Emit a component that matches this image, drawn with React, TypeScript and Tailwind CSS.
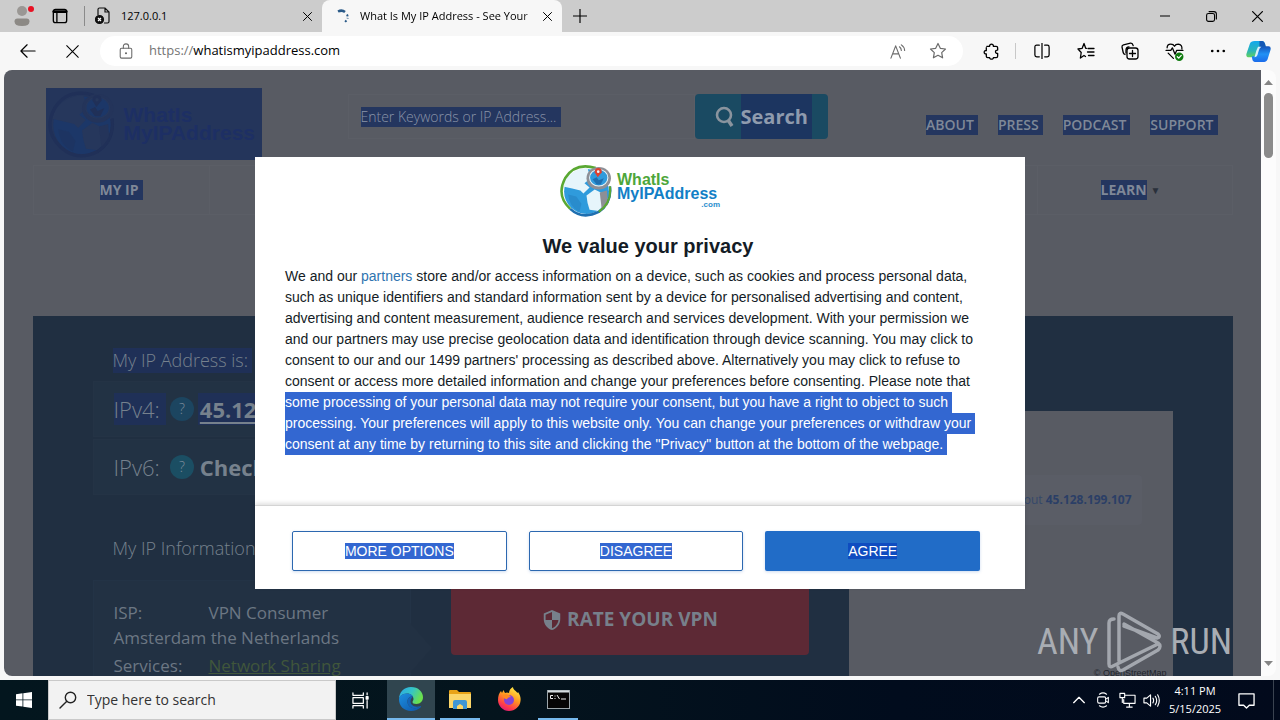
import type { ReactNode } from "react";
import { MdSecurity } from "react-icons/md";

const ui = "font-['Open_Sans','Noto_Sans',sans-serif]";

function Icon({ size = 18, sw = 1.2, children, className = "" }: { size?: number; sw?: number; children: ReactNode; className?: string }) {
  return (
    <svg width={size} height={size} viewBox="0 0 18 18" fill="none" stroke="currentColor" strokeWidth={sw} strokeLinecap="round" strokeLinejoin="round" className={className} aria-hidden="true">
      {children}
    </svg>
  );
}

const STAR = "M9 1.5l2.3 4.8 5.2.7-3.8 3.6.9 5.2L9 13.3l-4.6 2.5.9-5.2L1.500 7l5.200-.7z";

function IconButton({ label, className, children }: { label: string; className: string; children: ReactNode }) {
  return (
    <button aria-label={label} className={`flex h-full shrink-0 items-center justify-center ${className}`}>
      {children}
    </button>
  );
}

function CloseGlyph({ size = 10 }: { size?: number }) {
  return (
    <Icon size={size} sw={2}>
      <path d="M1 1l16 16M17 1L1 17" />
    </Icon>
  );
}

function TabBar() {
  return (
    <header className={`flex h-8 shrink-0 bg-[#cccccc] text-[11px] text-black ${ui}`}>
      <IconButton label="Profile" className="relative w-11">
        <svg width="20" height="20" viewBox="0 0 20 20" fill="#8c8985" aria-hidden="true">
          <circle cx="10" cy="5" r="5" fill="#9a9794" />
          <path d="M2.500 15.500q0-3 3-3h9q3 0 3 3 0 4.500-7.500 4.500t-7.500-4.500z" />
        </svg>
        <span className="absolute top-1.5 right-2.5 size-1.5 rounded-full bg-[#e81123]" />
      </IconButton>
      <IconButton label="Tab actions" className="w-10 pr-2">
        <Icon size={16} sw={1.5}>
          <rect x="1.500" y="1.500" width="15" height="15" rx="2.500" />
          <path d="M2 4h14" strokeWidth="3" /><path d="M5.500 4v12" />
        </Icon>
      </IconButton>
      <span className="my-1.5 w-px bg-[#8a8a8a]" />
      <div className="flex w-[237px] items-center pr-2.5 pl-2.5">
        <svg width="16" height="18" viewBox="0 0 16 18" fill="none" stroke="#111" strokeWidth="1.200" aria-hidden="true">
          <path d="M3 8V2.500Q3 1 4.500 1H10l4 4v9.500q0 1.500-1.500 1.500H9M10 1v4h4" />
          <circle cx="4.500" cy="12.500" r="4" fill="#111" />
          <path d="M3 11l3 3M6 11l-3 3" stroke="#fff" />
        </svg>
        <span className="ml-2.5 flex-1">127.0.0.1</span>
        <button aria-label="Close tab"><CloseGlyph size={9} /></button>
      </div>
      <div className="flex w-[240px] items-center rounded-t-lg bg-[#f7f7f7] pr-2.5 pl-3.5">
        <svg width="14" height="14" viewBox="0 0 14 14" fill="none" stroke="#2a5a88" strokeWidth="2" aria-hidden="true">
          <path d="M2 2.500Q6 .5 9 3" strokeWidth="2.500" />
          <path d="M11 5.500q1 2 .5 4M10.500 11.500L9 13" strokeDasharray="2 1.500" />
        </svg>
        <span className="ml-2.5 flex-1 bg-[linear-gradient(90deg,#000_88%,#bbb)] bg-clip-text whitespace-nowrap text-transparent">What Is My IP Address - See Your</span>
        <button aria-label="Close tab"><CloseGlyph size={9} /></button>
      </div>
      <IconButton label="New tab" className="w-9">
        <Icon size={14} sw={1.5}><path d="M9 0v18M0 9h18" /></Icon>
      </IconButton>
      <div className="ml-auto flex">
        <IconButton label="Minimize" className="w-[46px]"><Icon size={10} sw={2}><path d="M0 9h18" /></Icon></IconButton>
        <IconButton label="Restore" className="w-[46px]">
          <Icon size={11} sw={1.8}><rect x="1" y="4" width="13" height="13" rx="3" /><path d="M5 1h8q4 0 4 4v8" /></Icon>
        </IconButton>
        <IconButton label="Close window" className="w-[46px]"><CloseGlyph size={11} /></IconButton>
      </div>
    </header>
  );
}

function Toolbar() {
  return (
    <div className={`flex h-[38px] shrink-0 items-center bg-[#f7f7f7] pl-1.5 text-[13px] text-black ${ui}`}>
      <IconButton label="Back" className="w-11"><Icon size={16} sw={1.3}><path d="M17 9H1.500M8 2L1 9l7 7" /></Icon></IconButton>
      <IconButton label="Stop" className="mr-1.5 w-11"><Icon size={13} sw={1.5}><path d="M1 1l16 16M17 1L1 17" /></Icon></IconButton>
      <div className="flex h-[30px] flex-1 items-center rounded-full bg-white pr-4 pl-[18px] text-[#6b6b6b]">
        <Icon size={16}>
          <rect x="2.500" y="6" width="13" height="11" rx="1.500" /><path d="M6 6V4q0-3 3-3t3 3v2" /><circle cx="9" cy="11.500" r=".6" fill="currentColor" />
        </Icon>
        <a href="#" className="ml-[15px] flex-1 text-[#757575]">https://<span className="text-black">whatismyipaddress.com</span></a>
        <button aria-label="Read aloud" className="mr-[22px]">
          <Icon size={17}><path d="M1 16L6 3l5 13M3 11.500h6M10 4q2 1.500 2 4M12 2q3.500 2.500 3.500 6" /></Icon>
        </button>
        <button aria-label="Favorite this page"><Icon size={18}><path d={STAR} /></Icon></button>
      </div>
      <IconButton label="Extensions" className="ml-1.5 w-11">
        <Icon size={17} sw={1.4}><path d="M4 3.500h3c-.5-3 4.500-3 4 0h3q1.500 0 1.500 1.500v2.500c-3-.5-3 4 0 3.500V14q0 1.500-1.500 1.500h-3c.3 2.200-4.200 2.200-4 0H5Q3.500 15.500 3.500 14v-2.500C.5 12 .5 7.500 3.500 8V5" /></Icon>
      </IconButton>
      <span className="mr-1 ml-0.5 h-4 w-px bg-[#c8c8c8]" />
      <IconButton label="Split screen" className="w-11">
        <Icon size={16} sw={1.4}><path d="M6 2.500H3Q1 2.500 1 4.500v9q0 2 2 2h3M12 2.500h3q2 0 2 2v9q0 2-2 2h-3M9 0v18" /></Icon>
      </IconButton>
      <IconButton label="Favorites" className="w-11">
        <Icon size={18} sw={1.3}><path d="M9.500 6.300h-.8L7 1.500 5.200 6.300 1 7l3.200 3.500-.8 5.500L7 13.500l1.500 1M11 6.500h6M10.500 10h6.500M11.500 13.500H17" /></Icon>
      </IconButton>
      <IconButton label="Collections" className="w-11">
        <Icon size={18} sw={1.3}><rect x="6" y="6" width="11" height="11" rx="2.500" /><path d="M11.500 8.500v6M8.500 11.500h6M4 12.500q-1.500-.5-1.800-2L1 5Q.800 3.200 2.500 2.800L9.500 1.200q2-.3 2.700 2.500M5 11V8q0-3 3-3.200" /></Icon>
      </IconButton>
      <IconButton label="Browser essentials" className="w-11">
        <Icon size={19} sw={1.2}><path d="M1 8h4.500L7 5.500l2.500 6L11 8h6M2 5.500Q2 2 5.500 2 8 2 9 4q1-2 3.500-2Q16.500 2.500 16 6.500M3 10.500L8 15.500" /><circle cx="13.500" cy="14" r="4" fill="#107c10" stroke="none" /><path d="M11.700 14l1.300 1.300 2.400-2.600" stroke="#fff" /></Icon>
      </IconButton>
      <IconButton label="Settings and more" className="w-11">
        <Icon size={16}><g fill="currentColor" stroke="none"><circle cx="2.500" cy="9" r="1.500" /><circle cx="9" cy="9" r="1.500" /><circle cx="15.500" cy="9" r="1.500" /></g></Icon>
      </IconButton>
      <IconButton label="Copilot" className="w-10 pr-1">
        <svg width="25" height="23" viewBox="0 0 26 24" aria-hidden="true">
          <defs>
            <linearGradient id="cpA" x1="0" y1="0" x2="0" y2="1"><stop offset="0" stopColor="#12a8ee" /><stop offset=".6" stopColor="#2bb5b8" /><stop offset="1" stopColor="#62d25b" /></linearGradient>
            <linearGradient id="cpB" x1="0" y1="0" x2="0" y2="1"><stop offset="0" stopColor="#1552b8" /><stop offset=".5" stopColor="#2191f5" /><stop offset="1" stopColor="#1b6bea" /></linearGradient>
          </defs>
          <path d="M9 1h8q2 0 2.800 3l1 4h-4q-2.500 0-3.500 3l-1.500 5q-.8 2-2.800 2H3q-3.500 0-2.500-4L4 4q1-3 5-3z" fill="url(#cpA)" />
          <path d="M17 23H9q-2 0-2.500-3L6 17h3q2 0 3-3l1.500-5q.8-2.500 3.500-2.500h6.500q3 0 2 4L22.500 20q-1 3-5.500 3z" fill="url(#cpB)" />
          <path d="M14 1h3q2 0 2.800 3l.8 3H17q-2 0-3 1z" fill="#1457b5" />
          <path d="M12.500 7h3.500q-2 1-2.700 4l-1.500 5q-.8 2-3 2l2-7z" fill="#d9f1fb" />
        </svg>
      </IconButton>
    </div>
  );
}

function Globe({ dim = false, size }: { dim?: boolean; size: number }) {
  const c = dim
    ? { g: "#203058", b: "#203058", sea: "#1c3768", land: "#26375c", metal: "#24345a", pin: "#203058" }
    : { g: "#5aa832", b: "#1f6fb0", sea: "#2f9bdc", land: "#e6f5fb", metal: "#8d8f96", pin: "#e0402f" };
  return (
    <svg width={size} height={size} viewBox="0 0 52 52" aria-hidden="true">
      <circle cx="26" cy="27" r="22" fill={c.sea} />
      <path d="M3 22Q8 5 27 4L30 14 24 19 29 23 23 29 20 26 12 24Z" fill={c.land} />
      <path d="M26 31l8-6 8 4 4 8-8 9-9-1-2-7z" fill={c.land} />
      <path d="M8 30l8 2 5 7-2 8Q9 42 8 30z" fill={c.b} opacity=".35" />
      <path d="M35 4Q15-2 5 14-4 31 10 44" fill="none" stroke={c.g} strokeWidth="2.500" />
      <path d="M10 44Q22 55 38 47 51 38 49 22" fill="none" stroke={c.b} strokeWidth="2.500" />
      <path d="M39 28l7-2 1 14-6 5z" fill={c.metal} />
      <path d="M38 47Q51 38 49 22" fill="none" stroke={c.g} strokeWidth="2" />
      <ellipse cx="38" cy="14" rx="12" ry="11" fill={c.metal} />
      <ellipse cx="38" cy="13.500" rx="9" ry="8" fill={c.sea} stroke={c.land} strokeWidth="1" />
      <path d="M32 15l4-2 2 3 5-2-3 6h-4z" fill={c.b} />
      <path d="M37 13l-3-5q0-4 3.500-4T41 8z" fill={c.pin} />
      <circle cx="37.500" cy="7.500" r="1.300" fill={c.land} />
    </svg>
  );
}

function SiteHeader() {
  return (
    <div>
      <div className="flex h-[95px] items-start pt-[18px] pl-[13px]">
        <a href="#" aria-label="WhatIsMyIPAddress home" className="flex h-[72px] w-[216px] items-center bg-[#24355b] pl-0.5 font-['Liberation_Sans',sans-serif] font-bold text-[#1d2f64]">
          <Globe dim size={68} />
          <span className="ml-2 text-[21px] leading-[18px]">WhatIs<br />MyIPAddress</span>
        </a>
        <form className="mt-1.5 ml-[86px] flex h-[45px]" onSubmit={(e) => e.preventDefault()}>
          <label className="flex w-[347px] items-center border border-[#5b5e66] pl-3">
            <span className="flex w-[200px] bg-[#24365f]">
              <input aria-label="Search" placeholder="Enter Keywords or IP Address..." className="h-5 w-full bg-transparent text-sm font-light outline-none placeholder:text-[#8a94a8] placeholder:opacity-100" />
            </span>
          </label>
          <button className="flex w-[133px] items-center rounded-sm bg-[#1a4a62] pr-4 pl-5 text-xl font-bold text-[#8f9bae]">
            <svg width="20" height="22" viewBox="0 0 20 22" fill="none" stroke="#8a949e" strokeWidth="2.600" aria-hidden="true"><circle cx="9" cy="9" r="7" /><path d="M13 14l4 6" strokeWidth="3.500" /></svg>
            <span className="ml-1.5 flex h-full flex-1 items-center bg-[#1c3560]">Search</span>
          </button>
        </form>
        <nav className="mt-[27px] mr-[15px] ml-auto flex gap-5 text-sm leading-5 font-semibold text-[#7f8897]">
          {["ABOUT", "PRESS", "PODCAST", "SUPPORT"].map((t) => (
            <a key={t} href="#" className="bg-[#24365f] pr-1">{t}</a>
          ))}
        </nav>
      </div>
      <nav className="flex h-[50px] justify-between border border-[#5b5e66] text-sm leading-5 font-bold text-[#7f8897]">
        <a href="#" className="flex w-[176px] items-center justify-center border-r border-[#5b5e66]">
          <span className="bg-[#24365f] pr-1">MY IP</span>
        </a>
        <a href="#" className="flex w-[195px] items-center justify-center gap-1 border-l border-[#5b5e66] pr-2">
          <span className="bg-[#24365f]">LEARN</span>
          <span className="text-[10px] text-[#2a303b]">▼</span>
        </a>
      </nav>
    </div>
  );
}

function Help({ selected = false }: { selected?: boolean }) {
  return (
    <span className={`mx-1 flex size-6 items-center justify-center rounded-full text-sm text-[#7b8c9b] ${selected ? "bg-[#1c4560]" : "bg-[#1b4e63]"}`}>?</span>
  );
}

function Hero() {
  return (
    <section className="mt-[101px] flex h-[500px] bg-[#202f41] pr-[60px] pl-[60px] text-lg font-light text-[#76818d]">
      <div className="flex-1">
        <p className="mt-8 ml-5 w-fit bg-[#1f3057] pr-1 leading-[25px]">My IP Address is:</p>
        <div className="mt-2 flex h-14 items-center border border-[#243345] bg-[#223244] pl-5 text-[22px] leading-8">
          <span className="bg-[#1f3057] pr-1.5">IPv4:</span>
          <Help selected />
          <b className="bg-[#1f3057] pl-0.5 font-bold underline underline-offset-4">45.128.199.107</b>
        </div>
        <div className="mt-0.5 flex h-14 items-center border border-[#243345] bg-[#223244] pl-5 text-[22px] leading-8">
          <span className="pr-1.5">IPv6:</span>
          <Help />
          <b className="pl-0.5 font-bold">Checking...</b>
        </div>
        <p className="mt-10 ml-5 leading-[27px]">My IP Information:</p>
        <div className="mt-[18px] flex items-start">
          <div className="relative h-[200px] w-[318px] border border-[#233346] bg-[#223143] pt-[19px] pl-5 text-[17px] leading-[25px] font-normal text-[#6c7783]">
            <div className="flex"><span className="w-[95px]">ISP:</span><span>VPN Consumer</span></div>
            <div>Amsterdam the Netherlands</div>
            <div className="mt-[3px] flex"><span className="w-[95px]">Services:</span><a href="#" className="text-[#40563b] underline">Network Sharing</a></div>
            <svg className="absolute top-[42px] -right-[22px]" width="22" height="50" viewBox="0 0 22 50" aria-hidden="true"><path d="M0 0L22 25 0 50z" fill="#223143" /></svg>
          </div>
          <button className="ml-10 flex h-[75px] w-[358px] items-center justify-center gap-1 rounded-sm bg-[#5d2935] pt-1 text-[19px] font-bold text-[#77808b]">
            <MdSecurity size={22} />
            RATE YOUR VPN
          </button>
        </div>
      </div>
      <div className="mt-[95px] flex w-[324px] flex-col bg-[#585b63] pt-16">
        <div className="mr-[31px] flex h-[50px] items-center justify-end rounded-sm bg-[#5a5d66] pr-2.5 text-xs font-normal text-[#35486a]">
          <a href="#" className="whitespace-nowrap">about <b className="text-[#2b3f66]">45.128.199.107</b></a>
        </div>
        <span className="mt-[142px] mr-1.5 text-right font-['Liberation_Sans',sans-serif] text-[9px] leading-3 font-normal text-[#20242b]">© OpenStreetMap</span>
      </div>
    </section>
  );
}

const LINES = [
  "such as unique identifiers and standard information sent by a device for personalised advertising and content,",
  "advertising and content measurement, audience research and services development. With your permission we",
  "and our partners may use precise geolocation data and identification through device scanning. You may click to",
  "consent to our and our 1499 partners' processing as described above. Alternatively you may click to refuse to",
  "consent or access more detailed information and change your preferences before consenting. Please note that",
];
const SELECTED = [
  "some processing of your personal data may not require your consent, but you have a right to object to such",
  "processing. Your preferences will apply to this website only. You can change your preferences or withdraw your",
  "consent at any time by returning to this site and clicking the \"Privacy\" button at the bottom of the webpage.",
];

function Dialog() {
  return (
    <div role="dialog" aria-labelledby="privacy-title" className="flex h-[432px] w-[770px] flex-col bg-white font-['Liberation_Sans',Arial,sans-serif] text-sm text-[#141c26]">
      <div className="flex-1 pt-[7px] pl-[30px]">
        <div className="mr-[30px] flex items-center justify-center">
          <Globe size={53} />
          <div className="ml-1 flex w-[103px] flex-col font-bold">
            <span className="text-base leading-[14px] text-[#4ea63a]">WhatIs</span>
            <span className="text-base leading-[14px] text-[#127fc6]">MyIPAddress</span>
            <span className="text-right text-[8px] leading-2 text-[#2b8fce]">.com</span>
          </div>
        </div>
        <h1 id="privacy-title" className="mt-4 mr-[14px] text-center text-xl leading-[26px] font-bold">We value your privacy</h1>
        <div className="mt-[7px] leading-[21px] whitespace-nowrap">
          <p>We and our <a href="#" className="text-[#2f74b0]">partners</a> store and/or access information on a device, such as cookies and process personal data,</p>
          {LINES.map((l) => <p key={l}>{l}</p>)}
          {SELECTED.map((l) => <p key={l} className="w-fit bg-[#3367d1] pr-1 text-white">{l}</p>)}
        </div>
      </div>
      <div className="grid h-[84px] grid-cols-3 items-center gap-[22px] border-t border-[#d4d4d4] pt-1.5 pr-[45px] pl-[37px] shadow-[0_-2px_4px_rgba(0,0,0,0.12)]">
        {["MORE OPTIONS", "DISAGREE"].map((t) => (
          <button key={t} className="h-10 rounded-xs border border-[#2c68b0] text-white shadow-[0_1px_3px_rgba(50,110,190,0.25)]">
            <span className="bg-[#3367d1]">{t}</span>
          </button>
        ))}
        <button className="h-10 rounded-xs bg-[#216cc7] text-white shadow-[0_1px_3px_rgba(50,110,190,0.25)]"><span className="bg-[#0f4cc0]">AGREE</span></button>
      </div>
    </div>
  );
}

function Watermark() {
  return (
    <div className="absolute right-12 bottom-1.5 flex h-16 items-center gap-2 font-['Roboto_Condensed','Liberation_Sans_Narrow','Liberation_Sans',sans-serif] text-4xl leading-none text-[#a9adb3]">
      <span>ANY</span>
      <svg width="56" height="62" viewBox="0 0 56 62" fill="none" stroke="#a3a7ae" strokeWidth="3.500" strokeLinejoin="round" strokeLinecap="round" aria-hidden="true">
        <path d="M8 8Q3 8 3 12v41q0 4 4 2L52 33M13 50V5q0-4 4-2l35 20q3 3-1 4L18 15M12 56q1 5 5 3l35-20q4-4 0-7L18 13" />
      </svg>
      <span>RUN</span>
    </div>
  );
}

function Viewport() {
  return (
    <div className="relative min-h-0 flex-1 bg-[#f7f7f7] px-1 pb-1">
      <div className="flex h-full overflow-hidden rounded-lg bg-[#fcfcfc]">
        <main className={`min-w-0 flex-1 overflow-hidden bg-[#585b63] ${ui}`}>
          <div className="mx-auto max-w-[1200px]">
            <SiteHeader />
            <Hero />
          </div>
        </main>
        <div className="flex w-[15px] flex-col items-center pt-2.5 pb-2.5">
          <svg width="9" height="5" viewBox="0 0 9 5" aria-hidden="true"><path d="M0 5l4.500-5L9 5z" fill="#858585" /></svg>
          <span className="mt-2 h-[65px] w-[9px] rounded-full bg-[#8b8b8b]" />
          <svg className="mt-auto" width="9" height="5" viewBox="0 0 9 5" aria-hidden="true"><path d="M0 0l4.500 5L9 0z" fill="#858585" /></svg>
        </div>
      </div>
      <div className="absolute inset-0 bottom-1 flex items-center justify-center"><Dialog /></div>
      <Watermark />
    </div>
  );
}

function EdgeLogo() {
  return (
    <svg width="24" height="24" viewBox="0 0 24 24" aria-hidden="true">
      <defs>
        <linearGradient id="edA" x1="0" y1="0" x2="1" y2=".4"><stop offset="0" stopColor="#2ba7e8" /><stop offset=".55" stopColor="#35c5c6" /><stop offset="1" stopColor="#6be04d" /></linearGradient>
        <linearGradient id="edB" x1="0" y1="0" x2="1" y2="1"><stop offset="0" stopColor="#1c8fe0" /><stop offset="1" stopColor="#0f55a8" /></linearGradient>
      </defs>
      <path d="M0 12.500C0 5 5 0 12 0c7.500 0 12 5 12 10.300 0 4-3 6.700-6.500 6.700-3 0-4-1-4-2 0-.8 1-1.200 1-3C14.500 9 12 6.500 8 6.500c-5 0-8 3.500-8 6z" fill="url(#edA)" />
      <path d="M0 12.500C0 9 3.500 6.500 8 6.500c3 0 5 1.300 6 3-3.500-.5-5.500 2-5.500 5 0 4.500 4 7.500 8.500 6.500 2-.4 3.500-1.200 4.500-2 1 0 .5 1 .2 1.300C19.500 22.700 16 24 12 24 5 24 0 19 0 12.500z" fill="url(#edB)" />
      <path d="M14 9.500c-3.500-.5-5.500 2-5.500 5 0 4.500 4 7.500 8.500 6.500 2-.4 3.500-1.200 4.500-2-6 2-10-1-10-4.500 0-2 1-3.500 2.500-5z" fill="#1464b8" />
    </svg>
  );
}

function Taskbar() {
  return (
    <footer className={`flex h-10 shrink-0 bg-[linear-gradient(90deg,#03161e,#04141d_40%,#010c1d_70%,#020a1c)] text-white ${ui}`}>
      <IconButton label="Start" className="w-12">
        <svg width="16" height="16" viewBox="0 0 16 16" fill="#fff" aria-hidden="true"><path d="M0 2.200L6.500 1.300V7.500H0zM7.300 1.200L16 0v7.500H7.300zM0 8.300h6.500v6.300L0 13.700zM7.300 8.300H16V16l-8.700-1.200z" /></svg>
      </IconButton>
      <label className="flex w-[288px] items-center border border-[#c9c9c9] bg-[#f2f2f2] pl-2.5 text-[#222]">
        <Icon size={18} sw={1.4}><circle cx="11.500" cy="6.500" r="5.200" /><path d="M7.800 10.200L1 17" /></Icon>
        <input aria-label="Search" placeholder="Type here to search" className="ml-2.5 w-48 bg-transparent text-sm outline-none placeholder:text-[#333] placeholder:opacity-100" />
      </label>
      <IconButton label="Task view" className="w-12">
        <Icon size={17} sw={1.3}><path d="M1 1v2.500h11V1M1 17v-2.500h11V17M1 6h11v6H1zM16 1v2M16 9v8" /><rect x="15" y="5" width="2" height="2.500" fill="currentColor" /></Icon>
      </IconButton>
      <IconButton label="Microsoft Edge" className="ml-[3px] w-12 border-b-2 border-[#76b9ed] bg-[#30454f]"><EdgeLogo /></IconButton>
      <IconButton label="File Explorer" className="ml-[5px] w-10 border-b-2 border-[#76b9ed]">
        <svg width="22" height="19" viewBox="0 0 22 19" aria-hidden="true">
          <path d="M0 1q0-1 1-1h7l2 2h11q1 0 1 1v4H0z" fill="#e8a317" /><path d="M0 4h22v14H0z" fill="#fbd669" /><path d="M4 19v-7q0-2 2-2h10q2 0 2 2v7h-4v-3H8v3z" fill="#3f97d6" /><path d="M8 16l3-2 3 2v3H8z" fill="#fbd669" />
        </svg>
      </IconButton>
      <IconButton label="Firefox" className="ml-[5px] w-12 border-b-2 border-transparent">
        <svg width="24" height="24" viewBox="0 0 24 24" aria-hidden="true">
          <defs><linearGradient id="ff" x1=".8" y1="0" x2=".3" y2="1"><stop offset="0" stopColor="#fff14a" /><stop offset=".45" stopColor="#ff9a1f" /><stop offset=".8" stopColor="#ff3b4b" /><stop offset="1" stopColor="#e01b76" /></linearGradient></defs>
          <path d="M1 13c0-4 1-7 3-9l1 2 1.500-3L8 6q2-1 4 0c0-3 2-5 4-6 0 3 3 3.500 4.500 6l.5-1c2 3 3 5 2.500 9-.5 5.500-5.500 10-11.500 10S1 19 1 13z" fill="url(#ff)" />
          <circle cx="12" cy="13" r="5" fill="#8443d6" /><path d="M5 9q3-3 7-1l2 2q-3 0-4 2-2 1-5-3z" fill="#ff8a22" />
        </svg>
      </IconButton>
      <IconButton label="Command Prompt" className="ml-[5px] w-10 border-b-2 border-[#76b9ed]">
        <svg width="23" height="19" viewBox="0 0 23 19" aria-hidden="true">
          <rect x=".5" y=".5" width="22" height="18" fill="#050505" stroke="#9ba5aa" /><path d="M1 1.500h21" stroke="#d5dde0" strokeWidth="2" /><path d="M6 5.500H3.500v3H6M8 5.500v1M8 8v1M10 5l2.500 4M14 9h5" stroke="#eee" fill="none" />
        </svg>
      </IconButton>
      <div className="ml-auto flex items-center">
        <IconButton label="Show hidden icons" className="w-6"><Icon size={12} sw={2}><path d="M1 13l8-8 8 8" /></Icon></IconButton>
        <IconButton label="Meet now" className="w-6"><Icon size={16}><path d="M5 2.500q4-3 8 0M5 15.500q4 3 8 0" /><rect x="3" y="5.500" width="9" height="7" rx="1.500" /><path d="M12 8l3-2v6l-3-2" /></Icon></IconButton>
        <IconButton label="Network" className="w-6"><Icon size={17}><path d="M6 3.500h11v8.500H5V8M11 12v4M8 16h6M1 1.500h5V6H1zM3.500 6v5" /></Icon></IconButton>
        <IconButton label="Volume" className="w-6"><Icon size={17}><path d="M1 6.500h3L8 3v12l-4-3.500H1zM10.500 6.500q1.500 2.500 0 5M13 4.500q3 4.500 0 9M15.500 3q3.500 6 0 12" /></Icon></IconButton>
        <time className="ml-1.5 w-[52px] text-center text-[11px] leading-[18px] whitespace-nowrap">4:11 PM<br />5/15/2025</time>
        <IconButton label="Notifications" className="ml-1.5 w-[46px] pr-2"><Icon size={17} sw={1.4}><path d="M1 2h16v12h-5l-3 3-3-3H1z" /></Icon></IconButton>
        <span className="h-full border-l border-[#3a4350] pr-1.5" />
      </div>
    </footer>
  );
}

export default function App() {
  return (
    <div className="flex h-screen flex-col overflow-hidden">
      <TabBar />
      <Toolbar />
      <Viewport />
      <Taskbar />
    </div>
  );
}
